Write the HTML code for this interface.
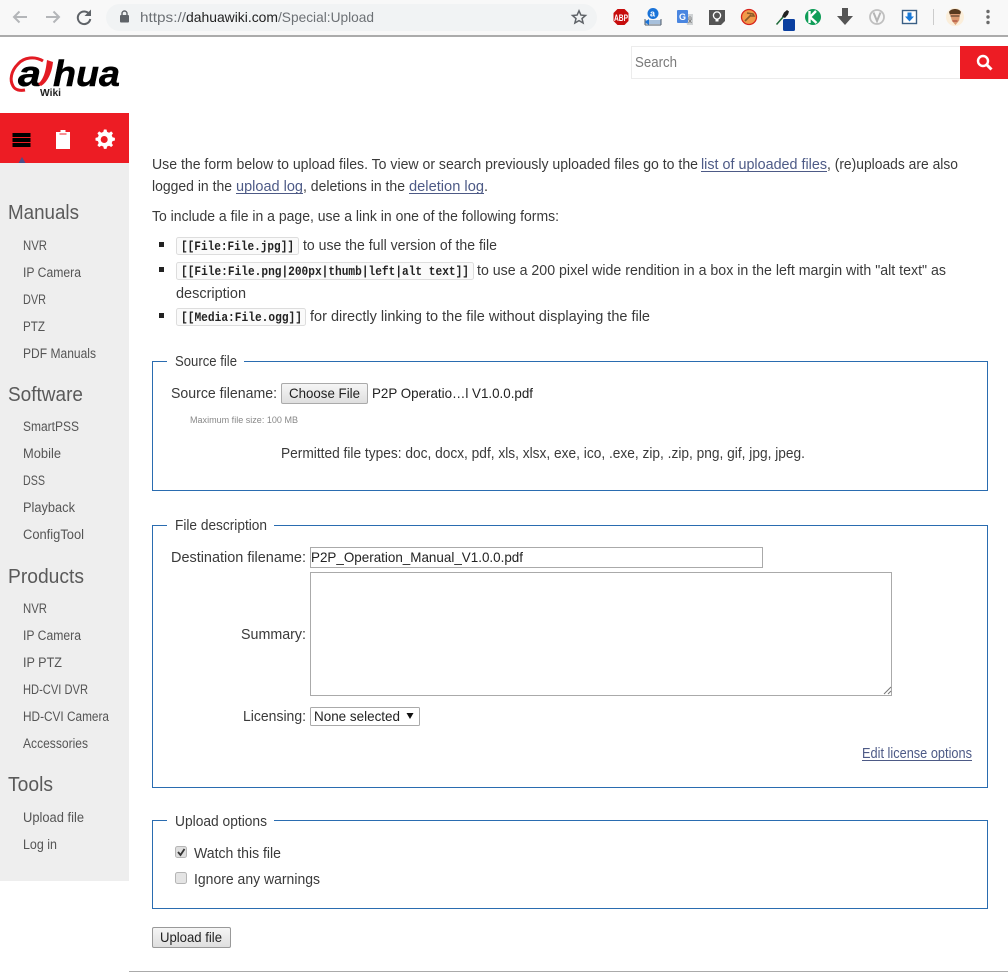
<!DOCTYPE html>
<html><head><meta charset="utf-8"><title>Upload file</title>
<style>
html,body{margin:0;padding:0;background:#fff;width:1008px;height:972px;overflow:hidden}
svg{display:block}
text{font-family:"Liberation Sans",sans-serif;font-size:14.5px;fill:#3a3a3a}
.s{font-size:13.5px;fill:#555}
.h{font-size:20px;fill:#5a5a5a}
.l{fill:#4d5a86}
.c{font-family:"Liberation Mono",monospace;font-size:12.5px;font-weight:bold;fill:#222}
.f{fill:#222;font-size:14px}
.u{stroke:#4d5a86;stroke-width:1}
</style></head><body>
<svg width="1008" height="972" viewBox="0 0 1008 972" xmlns="http://www.w3.org/2000/svg">
<defs><linearGradient id="b" x1="0" y1="0" x2="0" y2="1"><stop offset="0" stop-color="#f6f6f6"/><stop offset="1" stop-color="#dedede"/></linearGradient></defs>
<!-- browser bar -->
<rect width="1008" height="35" fill="#f8f8f8"/>
<rect y="35" width="1008" height="2" fill="#ababab"/>
<rect x="106" y="4" width="491" height="27" rx="13.5" fill="#f1f3f4"/>
<path d="M27 17H14M19.5 11.5L14 17l5.500 5.500" fill="none" stroke="#b4b6b9" stroke-width="2"/>
<path d="M46 17h13M53.500 11.500L59 17l-5.500 5.500" fill="none" stroke="#b4b6b9" stroke-width="2"/>
<path d="M89.500 14.500A6.300 6.300 0 1 0 90.300 19" fill="none" stroke="#5f6368" stroke-width="2"/><path d="M91 9.500v6.500h-6.500z" fill="#5f6368"/>
<rect x="120" y="15" width="9" height="7.500" rx="1" fill="#5f6368"/><path d="M122 15.500v-2a2.500 2.500 0 0 1 5 0v2" fill="none" stroke="#5f6368" stroke-width="1.400"/>
<text y="22" x="140" style="font-size:14px;fill:#6d7175" textLength="46" lengthAdjust="spacingAndGlyphs">https://</text>
<text y="22" x="186" style="font-size:14px;fill:#222" textLength="92" lengthAdjust="spacingAndGlyphs">dahuawiki.com</text>
<text y="22" x="278" style="font-size:14px;fill:#6d7175" textLength="96" lengthAdjust="spacingAndGlyphs">/Special:Upload</text>
<path d="M579 10.800l1.900 4.300 4.600.4-3.500 3 1.100 4.500-4.100-2.400-4.100 2.400 1.100-4.500-3.500-3 4.600-.4z" fill="none" stroke="#5f6368" stroke-width="1.500"/>
<!-- extensions -->
<path d="M617.500 9h7l4 4v8l-4 4h-7l-4-4v-8z" fill="#c70d0d"/>
<text x="614" y="21" style="font-size:9px;font-weight:bold;fill:#fff" textLength="14" lengthAdjust="spacingAndGlyphs">ABP</text>
<circle cx="653" cy="13.500" r="5.500" fill="#1a73d8"/><text x="650" y="16.500" style="font-size:9px;font-weight:bold;fill:#fff">a</text>
<rect x="645" y="20" width="16" height="4" fill="#a7c0dc"/><path d="M645 19v6M661 19v6M645 25h16" stroke="#4c5a6a" stroke-width="1"/><path d="M645 22l4-3v6z" fill="#1a73d8"/>
<path d="M685 14h8v11h-6z" fill="#cfd2d4"/><rect x="677" y="10" width="11" height="13" rx="1" fill="#4a86e0"/>
<text x="679" y="20" style="font-size:9px;font-weight:bold;fill:#fff">G</text><path d="M688 18h4M690 16v1M688.500 23l3-4M688.500 19l3 4" stroke="#777" stroke-width=".8" fill="none"/>
<path d="M709 10h16v11l-4 4h-12z" fill="#555"/><circle cx="717" cy="15.500" r="3.600" fill="none" stroke="#fff" stroke-width="1.300"/><path d="M715.500 19h3v2.500h-3z" fill="#fff"/>
<circle cx="749" cy="17" r="7.500" fill="#f09a4a" stroke="#d8241c" stroke-width="1.300"/><path d="M745 21l6-6M747 13l6 1 1 2-4 0" fill="none" stroke="#8a5a2a" stroke-width="1.600"/>
<path d="M776.500 24.500l7-8" stroke="#1f6a3a" stroke-width="1.500"/><path d="M782 16.500l2-4 3-2.500 2 1.500-1 3-3 3.500z" fill="#222"/>
<rect x="783" y="19" width="12" height="12" rx="1.500" fill="#0a3fa0"/>
<circle cx="813" cy="17" r="8" fill="#0f9d58"/><path d="M809.500 11v12M810 17l6-6M810 17l6.500 6" stroke="#fff" stroke-width="2.400" fill="none"/>
<path d="M842 8h6v8h5l-8 9-8-9h5z" fill="#555"/>
<circle cx="877" cy="17" r="7" fill="none" stroke="#c0c0c0" stroke-width="1.800"/><path d="M873.500 12.500L877 21l3.500-8.500" fill="none" stroke="#b5b5b5" stroke-width="2"/>
<rect x="902.500" y="10.500" width="14" height="13" fill="#fff" stroke="#3a5f85" stroke-width="1.400"/><path d="M907.500 12.500h4v4h2.500L909.500 21.500l-4.500-5h2.500z" fill="#1a7ad8"/>
<rect x="933" y="9" width="1" height="16" fill="#ccc"/>
<circle cx="955" cy="17" r="9" fill="#fbeeda"/><path d="M949 12c2-4 10-4 12 0l-1 3h-10z" fill="#5a3a20"/><path d="M950 14h10l-.8 6.500L955.500 25l-3.500-4z" fill="#dc9a72"/><path d="M952.500 21h5" stroke="#a03c30" stroke-width="1"/><path d="M950.500 16h9" stroke="#4a3020" stroke-width="1"/>
<circle cx="988" cy="11.500" r="1.700" fill="#6a6a6a"/><circle cx="988" cy="17" r="1.700" fill="#6a6a6a"/><circle cx="988" cy="22.500" r="1.700" fill="#6a6a6a"/>
<!-- logo -->
<path d="M43 61C35 56 24 57 18 64C11 71 9.500 80 13 86C15 90 20 91 25 90" fill="none" stroke="#e31b23" stroke-width="3"/>
<text x="18" y="86" style="font-size:36px;font-weight:bold;font-style:italic;fill:#000;stroke:#000;stroke-width:.5" textLength="23" lengthAdjust="spacingAndGlyphs">a</text>
<path d="M41 86C48 82 52 72 53 62l-6-2C46 68 45 78 38 84z" fill="#e31b23"/>
<text x="53" y="86" style="font-size:36px;font-weight:bold;font-style:italic;fill:#000;stroke:#000;stroke-width:.5" textLength="67" lengthAdjust="spacingAndGlyphs">hua</text>
<text x="40" y="96" style="font-size:10.500px;font-weight:bold;fill:#222" textLength="21" lengthAdjust="spacingAndGlyphs">Wiki</text>
<!-- search -->
<rect x="631.500" y="46.500" width="329" height="32" fill="#fff" stroke="#ececec"/>
<text x="635" y="67" style="font-size:14.500px;fill:#7a7a7a" textLength="42" lengthAdjust="spacingAndGlyphs">Search</text>
<rect x="960" y="46" width="48" height="33" fill="#ed1c24"/>
<circle cx="983" cy="61" r="5" fill="none" stroke="#fff" stroke-width="2.400"/><path d="M986.500 64.500l5 5" stroke="#fff" stroke-width="3"/>
<!-- sidebar -->
<rect y="163" width="129" height="718" fill="#eeeeee"/>
<rect y="113" width="129" height="50" fill="#ed1c24"/>
<path d="M12.500 133h18v4h-18zM12.500 138h18v4h-18zM12.500 143h18v4h-18z" fill="#000"/>
<path d="M22 163h-3.500l3.500-6 3.500 6z" fill="#4d4f8a"/>
<path d="M56 132h4.500v-2h5v2H70v17H56z" fill="#fff"/><path d="M59.500 134h7" stroke="#ed1c24" stroke-width="1"/>
<g transform="translate(-.5 0)"><path d="M105.500 129.500l2.500 0 .6 2.400 2 .8 2.100-1.300 1.800 1.800-1.300 2.100.8 2 2.400.6v2.600l-2.400.6-.8 2 1.300 2.100-1.800 1.800-2.100-1.300-2 .8-.6 2.400h-2.600l-.6-2.400-2-.8-2.100 1.300-1.800-1.800 1.300-2.100-.8-2-2.400-.6v-2.600l2.400-.6.8-2-1.300-2.100 1.800-1.800 2.100 1.300 2-.8.600-2.400z" fill="#fff" transform="translate(-1 0)"/><circle cx="104.700" cy="139.500" r="3.500" fill="#ed1c24"/></g>
<text class="h" x="8" y="219" textLength="71" lengthAdjust="spacingAndGlyphs">Manuals</text>
<text class="s" x="23" y="250" textLength="24" lengthAdjust="spacingAndGlyphs">NVR</text>
<text class="s" x="23" y="277" textLength="58" lengthAdjust="spacingAndGlyphs">IP Camera</text>
<text class="s" x="23" y="304" textLength="23" lengthAdjust="spacingAndGlyphs">DVR</text>
<text class="s" x="23" y="331" textLength="22" lengthAdjust="spacingAndGlyphs">PTZ</text>
<text class="s" x="23" y="358" textLength="73" lengthAdjust="spacingAndGlyphs">PDF Manuals</text>
<text class="h" x="8" y="401" textLength="75" lengthAdjust="spacingAndGlyphs">Software</text>
<text class="s" x="23" y="431" textLength="56" lengthAdjust="spacingAndGlyphs">SmartPSS</text>
<text class="s" x="23" y="458" textLength="38" lengthAdjust="spacingAndGlyphs">Mobile</text>
<text class="s" x="23" y="485" textLength="22" lengthAdjust="spacingAndGlyphs">DSS</text>
<text class="s" x="23" y="512" textLength="52" lengthAdjust="spacingAndGlyphs">Playback</text>
<text class="s" x="23" y="539" textLength="61" lengthAdjust="spacingAndGlyphs">ConfigTool</text>
<text class="h" x="8" y="583" textLength="76" lengthAdjust="spacingAndGlyphs">Products</text>
<text class="s" x="23" y="613" textLength="24" lengthAdjust="spacingAndGlyphs">NVR</text>
<text class="s" x="23" y="640" textLength="58" lengthAdjust="spacingAndGlyphs">IP Camera</text>
<text class="s" x="23" y="667" textLength="39" lengthAdjust="spacingAndGlyphs">IP PTZ</text>
<text class="s" x="23" y="694" textLength="65" lengthAdjust="spacingAndGlyphs">HD-CVI DVR</text>
<text class="s" x="23" y="721" textLength="86" lengthAdjust="spacingAndGlyphs">HD-CVI Camera</text>
<text class="s" x="23" y="748" textLength="65" lengthAdjust="spacingAndGlyphs">Accessories</text>
<text class="h" x="8" y="791" textLength="45" lengthAdjust="spacingAndGlyphs">Tools</text>
<text class="s" x="23" y="822" textLength="61" lengthAdjust="spacingAndGlyphs">Upload file</text>
<text class="s" x="23" y="849" textLength="34" lengthAdjust="spacingAndGlyphs">Log in</text>
<!-- intro -->
<text x="152" y="169" textLength="546" lengthAdjust="spacingAndGlyphs">Use the form below to upload files. To view or search previously uploaded files go to the</text>
<text class="l" x="701" y="169" textLength="126" lengthAdjust="spacingAndGlyphs">list of uploaded files</text><path class="u" d="M701 171.500h126"/>
<text x="827" y="169" textLength="131" lengthAdjust="spacingAndGlyphs">, (re)uploads are also</text>
<text x="152" y="191" textLength="80" lengthAdjust="spacingAndGlyphs">logged in the</text>
<text class="l" x="236" y="191" textLength="67" lengthAdjust="spacingAndGlyphs">upload log</text><path class="u" d="M236 193.500h67"/>
<text x="303" y="191" textLength="102" lengthAdjust="spacingAndGlyphs">, deletions in the</text>
<text class="l" x="409" y="191" textLength="75" lengthAdjust="spacingAndGlyphs">deletion log</text><path class="u" d="M409 193.500h75"/>
<text x="484" y="191">.</text>
<text x="152" y="221" textLength="407" lengthAdjust="spacingAndGlyphs">To include a file in a page, use a link in one of the following forms:</text>
<rect x="159" y="242" width="5" height="5" fill="#222"/><rect x="159" y="267" width="5" height="5" fill="#222"/><rect x="159" y="313" width="5" height="5" fill="#222"/>
<rect x="176.500" y="237.500" width="122" height="17" rx="2" fill="#fafafa" stroke="#ddd"/>
<text class="c" x="181" y="250" textLength="113" lengthAdjust="spacingAndGlyphs">[[File:File.jpg]]</text>
<text x="303" y="250" textLength="194" lengthAdjust="spacingAndGlyphs">to use the full version of the file</text>
<rect x="176.500" y="262.500" width="297" height="17" rx="2" fill="#fafafa" stroke="#ddd"/>
<text class="c" x="181" y="275" textLength="288" lengthAdjust="spacingAndGlyphs">[[File:File.png|200px|thumb|left|alt text]]</text>
<text x="477" y="275" textLength="469" lengthAdjust="spacingAndGlyphs">to use a 200 pixel wide rendition in a box in the left margin with "alt text" as</text>
<text x="176" y="298" textLength="70" lengthAdjust="spacingAndGlyphs">description</text>
<rect x="176.500" y="308.500" width="129" height="17" rx="2" fill="#fafafa" stroke="#ddd"/>
<text class="c" x="181" y="321" textLength="121" lengthAdjust="spacingAndGlyphs">[[Media:File.ogg]]</text>
<text x="310" y="321" textLength="340" lengthAdjust="spacingAndGlyphs">for directly linking to the file without displaying the file</text>
<!-- fieldset 1 -->
<path d="M167 361.500H152.500V490.500H987.500V361.500H244" fill="none" stroke="#2a6cb0"/>
<text x="175" y="366" textLength="62" lengthAdjust="spacingAndGlyphs">Source file</text>
<text x="171" y="398" textLength="106" lengthAdjust="spacingAndGlyphs">Source filename:</text>
<rect x="281.500" y="383.500" width="86" height="20" rx="1.500" fill="url(#b)" stroke="#aaa"/>
<text class="f" x="289" y="398" textLength="71" lengthAdjust="spacingAndGlyphs">Choose File</text>
<text class="f" x="372" y="398" textLength="161" lengthAdjust="spacingAndGlyphs">P2P Operatio…l V1.0.0.pdf</text>
<text x="190" y="423" style="font-size:9px;fill:#888" textLength="108" lengthAdjust="spacingAndGlyphs">Maximum file size: 100 MB</text>
<text x="281" y="458" textLength="524" lengthAdjust="spacingAndGlyphs">Permitted file types: doc, docx, pdf, xls, xlsx, exe, ico, .exe, zip, .zip, png, gif, jpg, jpeg.</text>
<!-- fieldset 2 -->
<path d="M167 525.500H152.500V787.500H987.500V525.500H274" fill="none" stroke="#2a6cb0"/>
<text x="175" y="530" textLength="92" lengthAdjust="spacingAndGlyphs">File description</text>
<text x="171" y="562" textLength="135" lengthAdjust="spacingAndGlyphs">Destination filename:</text>
<rect x="310.500" y="547.500" width="452" height="20" fill="#fff" stroke="#aaa"/>
<text class="f" x="311" y="562" textLength="212" lengthAdjust="spacingAndGlyphs">P2P_Operation_Manual_V1.0.0.pdf</text>
<rect x="310.500" y="572.500" width="581" height="123" fill="#fff" stroke="#aaa"/>
<path d="M884 694l7-7M888 694l3-3" stroke="#777" stroke-width="1"/>
<text x="241" y="639" textLength="65" lengthAdjust="spacingAndGlyphs">Summary:</text>
<text x="243" y="721" textLength="63" lengthAdjust="spacingAndGlyphs">Licensing:</text>
<rect x="310.500" y="707.500" width="109" height="18" rx="1" fill="#fff" stroke="#aaa"/>
<text class="f" x="314" y="721" textLength="86" lengthAdjust="spacingAndGlyphs">None selected</text>
<path d="M406.500 713h7l-3.500 6z" fill="#111"/>
<text class="l" x="862" y="758" textLength="110" lengthAdjust="spacingAndGlyphs">Edit license options</text><path class="u" d="M862 760.500h110"/>
<!-- fieldset 3 -->
<path d="M167 820.500H152.500V908.500H987.500V820.500H274" fill="none" stroke="#2a6cb0"/>
<text x="175" y="826" textLength="92" lengthAdjust="spacingAndGlyphs">Upload options</text>
<rect x="175.500" y="846.500" width="11" height="11" rx="2" fill="#dedede" stroke="#b5b5b5"/>
<path d="M178 852l2.500 3 4-6" fill="none" stroke="#333" stroke-width="1.800"/>
<text x="194" y="858" textLength="87" lengthAdjust="spacingAndGlyphs">Watch this file</text>
<rect x="175.500" y="872.500" width="11" height="11" rx="2" fill="#e4e4e4" stroke="#b5b5b5"/>
<text x="194" y="884" textLength="126" lengthAdjust="spacingAndGlyphs">Ignore any warnings</text>
<rect x="152.500" y="927.500" width="78" height="20" rx="1.500" fill="url(#b)" stroke="#999"/>
<text class="f" x="160" y="942" textLength="62" lengthAdjust="spacingAndGlyphs">Upload file</text>
<rect x="129" y="971" width="879" height="1" fill="#aaa"/>
</svg>
</body></html>
